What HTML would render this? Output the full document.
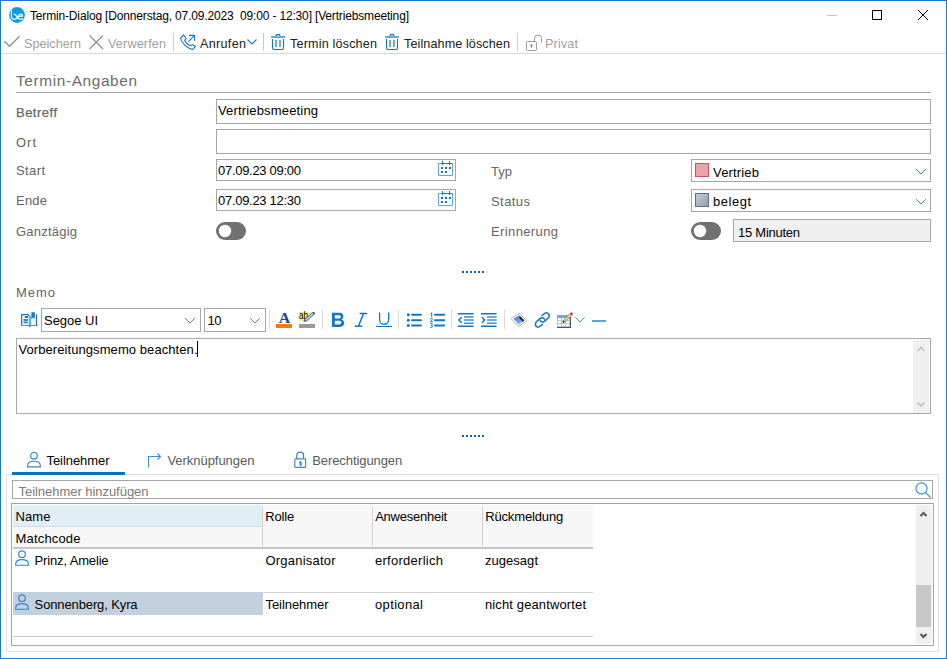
<!DOCTYPE html>
<html><head><meta charset="utf-8"><title>Termin-Dialog</title>
<style>html,body{margin:0;padding:0;background:#fff;overflow:hidden} svg{display:block} text{white-space:pre}</style>
</head><body><svg width="947" height="659" viewBox="0 0 947 659" font-family='"Liberation Sans", sans-serif'><rect x="0" y="0" width="947" height="659" fill="#ffffff"/>
<circle cx="17" cy="15" r="7.9" fill="#0d9ce6"/>
<path d="M11.4 10 V16 C11.4 18.4 12.8 19.3 14.6 19.3 C16.4 19.3 17.3 18 17.9 16.8 C18.7 15.2 19.5 14.1 20.9 14.1 C22 14.1 22.5 15 22.5 15.9 L18.8 16.6" fill="none" stroke="#fff" stroke-width="1.25"/>
<path d="M13.8 14.1 C15.5 14.1 16.4 15.5 17.1 16.9 C17.9 18.5 18.9 19.3 20.5 19.3 C21.5 19.3 22.3 18.9 22.8 18.3" fill="none" stroke="#fff" stroke-width="1.25"/>
<text x="30" y="20.3" font-size="12" fill="#000" font-weight="normal" text-anchor="start" textLength="379" lengthAdjust="spacing" >Termin-Dialog [Donnerstag, 07.09.2023&#160; 09:00 - 12:30] [Vertriebsmeeting]</text>
<rect x="827" y="15" width="10" height="1" fill="#c4c4c4"/>
<rect x="872.5" y="10.5" width="9" height="9" fill="none" stroke="#000" stroke-width="1" rx="0" />
<path d="M918 10 L928 20 M928 10 L918 20" stroke="#000" stroke-width="1" fill="none"/>
<path d="M4.3 41.3 L9.5 46.3 L19.6 36.3" stroke="#8f8f8f" stroke-width="1.3" fill="none"/>
<text x="24" y="47.5" font-size="12.6" fill="#a0a0a0" font-weight="normal" text-anchor="start" textLength="57" lengthAdjust="spacing" >Speichern</text>
<path d="M89.5 35.5 L103 49 M103 35.5 L89.5 49" stroke="#8a8a8a" stroke-width="1.1" fill="none"/>
<text x="108" y="47.5" font-size="12.6" fill="#a0a0a0" font-weight="normal" text-anchor="start" textLength="58" lengthAdjust="spacing" >Verwerfen</text>
<rect x="173" y="33" width="1" height="18" fill="#cccccc"/>
<path d="M183.6 35 L180.6 38.2 C181 42 186 47.5 192.2 49.6 L195.6 46.4 L192.2 44.6 L190.2 45.8 C188 44.8 185.6 42.4 184.6 40.4 L186.2 38.6 Z" stroke="#1276c6" stroke-width="1.1" fill="none" stroke-linejoin="round"/>
<path d="M188.4 41.6 L194.6 35.4 M189 35.4 H194.6 V40.8" stroke="#1276c6" stroke-width="1.1" fill="none"/>
<text x="200" y="47.5" font-size="12.6" fill="#202020" font-weight="normal" text-anchor="start" textLength="46" lengthAdjust="spacing" >Anrufen</text>
<path d="M247.5 39.5 L252 44 L256.5 39.5" stroke="#1276c6" stroke-width="1.1" fill="none"/>
<rect x="263" y="33" width="1" height="18" fill="#cccccc"/>
<path d="M275.5 37 L276.5 34.6 H279.5 L280.5 37" stroke="#1276c6" stroke-width="1.1" fill="none"/>
<rect x="271" y="36" width="14" height="2" fill="#62a9de"/>
<path d="M272.5 39 V48 Q272.5 49.5 274 49.5 H282 Q283.5 49.5 283.5 48 V39" stroke="#1276c6" stroke-width="1.15" fill="none"/>
<rect x="275" y="40" width="2" height="7" fill="#6aaee0"/>
<rect x="279" y="40" width="2" height="7" fill="#6aaee0"/>
<text x="290" y="47.5" font-size="12.6" fill="#202020" font-weight="normal" text-anchor="start" textLength="87" lengthAdjust="spacing" >Termin löschen</text>
<path d="M389.5 37 L390.5 34.6 H393.5 L394.5 37" stroke="#1276c6" stroke-width="1.1" fill="none"/>
<rect x="385" y="36" width="14" height="2" fill="#62a9de"/>
<path d="M386.5 39 V48 Q386.5 49.5 388 49.5 H396 Q397.5 49.5 397.5 48 V39" stroke="#1276c6" stroke-width="1.15" fill="none"/>
<rect x="389" y="40" width="2" height="7" fill="#6aaee0"/>
<rect x="393" y="40" width="2" height="7" fill="#6aaee0"/>
<text x="404" y="47.5" font-size="12.6" fill="#202020" font-weight="normal" text-anchor="start" textLength="106" lengthAdjust="spacing" >Teilnahme löschen</text>
<rect x="517" y="33" width="1" height="18" fill="#cccccc"/>
<rect x="526.5" y="41.5" width="10" height="9" rx="1" stroke="#9a9a9a" stroke-width="1" fill="none"/>
<path d="M534.5 41.5 V38.5 A3.5 3.5 0 0 1 541.5 38.5 V42.5" stroke="#9a9a9a" stroke-width="1" fill="none"/>
<path d="M531.5 48 V44.5 M530 46 L531.5 44.3 L533 46" stroke="#9a9a9a" stroke-width="1" fill="none"/>
<text x="545" y="47.5" font-size="12.6" fill="#a0a0a0" font-weight="normal" text-anchor="start" textLength="33" lengthAdjust="spacing" >Privat</text>
<rect x="1" y="53" width="945" height="1" fill="#d9d9d9"/>
<text x="16" y="86" font-size="15.4" fill="#6d6d6d" font-weight="normal" text-anchor="start" textLength="121" lengthAdjust="spacing" >Termin-Angaben</text>
<rect x="16" y="92" width="915" height="1" fill="#a0a0a0"/>
<text x="16" y="117" font-size="13" fill="#656565" font-weight="normal" text-anchor="start" textLength="41" lengthAdjust="spacing" stroke="#6d6d6d" stroke-width="0.25">Betreff</text>
<text x="16" y="147.2" font-size="13" fill="#656565" font-weight="normal" text-anchor="start" textLength="20" lengthAdjust="spacing" >Ort</text>
<text x="16" y="174.7" font-size="13" fill="#656565" font-weight="normal" text-anchor="start" textLength="29" lengthAdjust="spacing" >Start</text>
<text x="16" y="204.6" font-size="13" fill="#656565" font-weight="normal" text-anchor="start" textLength="31" lengthAdjust="spacing" >Ende</text>
<text x="16" y="236" font-size="13" fill="#656565" font-weight="normal" text-anchor="start" textLength="61" lengthAdjust="spacing" >Ganztägig</text>
<rect x="216.5" y="99.5" width="714" height="24" fill="#fff" stroke="#a6a6a6" stroke-width="1" rx="0" />
<text x="218" y="115.2" font-size="13" fill="#000" font-weight="normal" text-anchor="start" textLength="100" lengthAdjust="spacing" >Vertriebsmeeting</text>
<rect x="216.5" y="129.5" width="714" height="24" fill="#fff" stroke="#a6a6a6" stroke-width="1" rx="0" />
<rect x="216.5" y="159.5" width="239" height="21" fill="#fff" stroke="#a6a6a6" stroke-width="1" rx="0" />
<text x="218" y="174.6" font-size="13" fill="#000" font-weight="normal" text-anchor="start" textLength="83" lengthAdjust="spacing" >07.09.23 09:00</text>
<rect x="216.5" y="189.5" width="239" height="21" fill="#fff" stroke="#a6a6a6" stroke-width="1" rx="0" />
<text x="218" y="204.6" font-size="13" fill="#000" font-weight="normal" text-anchor="start" textLength="83" lengthAdjust="spacing" >07.09.23 12:30</text>
<path d="M439.8 163.5 H438.5 V174.4 Q438.5 175.5 439.6 175.5 H451.4 Q452.5 175.5 452.5 174.4 V163.5 H451.5" stroke="#5aa8de" stroke-width="1.1" fill="none"/>
<path d="M442.5 161 V165 M449.5 161 V165 M440.4 163.5 H452" stroke="#1a78c4" stroke-width="1.1" fill="none"/>
<rect x="441" y="167" width="2" height="2" fill="#1e6fb8"/>
<rect x="445" y="167" width="2" height="2" fill="#1e6fb8"/>
<rect x="449" y="167" width="2" height="2" fill="#1e6fb8"/>
<rect x="441" y="171" width="2" height="2" fill="#1e6fb8"/>
<rect x="445" y="171" width="2" height="2" fill="#1e6fb8"/>
<path d="M439.8 193.5 H438.5 V204.4 Q438.5 205.5 439.6 205.5 H451.4 Q452.5 205.5 452.5 204.4 V193.5 H451.5" stroke="#5aa8de" stroke-width="1.1" fill="none"/>
<path d="M442.5 191 V195 M449.5 191 V195 M440.4 193.5 H452" stroke="#1a78c4" stroke-width="1.1" fill="none"/>
<rect x="441" y="197" width="2" height="2" fill="#1e6fb8"/>
<rect x="445" y="197" width="2" height="2" fill="#1e6fb8"/>
<rect x="449" y="197" width="2" height="2" fill="#1e6fb8"/>
<rect x="441" y="201" width="2" height="2" fill="#1e6fb8"/>
<rect x="445" y="201" width="2" height="2" fill="#1e6fb8"/>
<rect x="216" y="222" width="30" height="18" rx="9" fill="#717171"/>
<circle cx="225" cy="231" r="6.2" fill="#fff"/>
<text x="491" y="175.8" font-size="13" fill="#656565" font-weight="normal" text-anchor="start" textLength="21" lengthAdjust="spacing" >Typ</text>
<text x="491" y="206.2" font-size="13" fill="#656565" font-weight="normal" text-anchor="start" textLength="39" lengthAdjust="spacing" >Status</text>
<text x="491" y="235.8" font-size="13" fill="#656565" font-weight="normal" text-anchor="start" textLength="67" lengthAdjust="spacing" >Erinnerung</text>
<rect x="691.5" y="159.5" width="239" height="22" fill="#fff" stroke="#a6a6a6" stroke-width="1" rx="0" />
<rect x="691.5" y="189.5" width="239" height="22" fill="#fff" stroke="#a6a6a6" stroke-width="1" rx="0" />
<rect x="695.5" y="163.5" width="13" height="13" fill="#eaa3aa" stroke="#d2505c" stroke-width="1"/>
<defs><linearGradient id="gs" x1="0" y1="0" x2="1" y2="1"><stop offset="0" stop-color="#c4cedb"/><stop offset="1" stop-color="#8e9db4"/></linearGradient></defs>
<rect x="695.5" y="193.5" width="13" height="13" fill="url(#gs)" stroke="#5d6f8c" stroke-width="1"/>
<text x="713" y="176.9" font-size="13" fill="#000" font-weight="normal" text-anchor="start" textLength="46" lengthAdjust="spacing" >Vertrieb</text>
<text x="713" y="206" font-size="13" fill="#000" font-weight="normal" text-anchor="start" textLength="38" lengthAdjust="spacing" >belegt</text>
<path d="M916.2 169.2 L921 174 L925.8 169.2" stroke="#2a8ad0" stroke-width="1.0" fill="none"/>
<path d="M916.2 199.2 L921 204 L925.8 199.2" stroke="#2a8ad0" stroke-width="1.0" fill="none"/>
<rect x="691" y="222" width="30" height="18" rx="9" fill="#717171"/>
<circle cx="700" cy="231" r="6.2" fill="#fff"/>
<rect x="733.5" y="219.5" width="197" height="22" fill="#f0f0f0" stroke="#a6a6a6" stroke-width="1" rx="0" />
<text x="738" y="237.2" font-size="13" fill="#000" font-weight="normal" text-anchor="start" textLength="62" lengthAdjust="spacing" >15 Minuten</text>
<rect x="462" y="271" width="2" height="2" fill="#0563b0"/>
<rect x="466" y="271" width="2" height="2" fill="#0563b0"/>
<rect x="470" y="271" width="2" height="2" fill="#0563b0"/>
<rect x="474" y="271" width="2" height="2" fill="#0563b0"/>
<rect x="478" y="271" width="2" height="2" fill="#0563b0"/>
<rect x="482" y="271" width="2" height="2" fill="#0563b0"/>
<text x="16" y="297" font-size="13" fill="#656565" font-weight="normal" text-anchor="start" textLength="39" lengthAdjust="spacing" >Memo</text>
<path d="M21.6 325.2 V314.6 H27.6 L29.2 315.8" stroke="#1a78c4" stroke-width="1.25" fill="none"/>
<path d="M36.5 314.3 V325.2" stroke="#1a78c4" stroke-width="1.25" fill="none"/>
<rect x="21" y="325" width="17" height="1" fill="#4a9ad6"/>
<rect x="28.8" y="315.8" width="2.3999999999999986" height="10.199999999999989" fill="#6aaee0"/>
<path d="M28 325.6 H31.2 L29.6 327.2 Z" fill="#1a78c4"/>
<path d="M31.4 312.2 H34.8 V318.9 L33.1 317.6 L31.4 318.9 Z" fill="#1a78c4"/>
<rect x="24.8" y="316" width="3.1999999999999993" height="2" fill="#1a78c4"/>
<rect x="23.4" y="319" width="4.600000000000001" height="2" fill="#3a8ed0"/>
<rect x="23.4" y="321.4" width="4.600000000000001" height="2.0" fill="#3a8ed0"/>
<rect x="41.5" y="308.5" width="159" height="23" fill="#fff" stroke="#a4a6aa" stroke-width="1" rx="0" />
<text x="44" y="325.2" font-size="13" fill="#000" font-weight="normal" text-anchor="start" textLength="54" lengthAdjust="spacing" >Segoe UI</text>
<path d="M185.2 318.2 L190 323 L194.8 318.2" stroke="#2f8ed2" stroke-width="1.0" fill="none"/>
<rect x="204.5" y="308.5" width="61" height="23" fill="#fff" stroke="#a4a6aa" stroke-width="1" rx="0" />
<text x="207.5" y="324.5" font-size="13" fill="#000" font-weight="normal" text-anchor="start" textLength="14" lengthAdjust="spacing" >10</text>
<path d="M250.2 318.2 L255 323 L259.8 318.2" stroke="#2f8ed2" stroke-width="1.0" fill="none"/>
<rect x="269" y="310" width="1" height="19" fill="#d8d8d8"/>
<rect x="322" y="310" width="1" height="19" fill="#d8d8d8"/>
<rect x="398" y="310" width="1" height="19" fill="#d8d8d8"/>
<rect x="451" y="310" width="1" height="19" fill="#d8d8d8"/>
<rect x="504" y="310" width="1" height="19" fill="#d8d8d8"/>
<text x="284.6" y="322.9" font-family="Liberation Serif" font-weight="bold" font-size="15" fill="#24428e" text-anchor="middle" textLength="11.5" lengthAdjust="spacingAndGlyphs">A</text>
<rect x="276" y="324" width="16" height="4" fill="#ff7a00"/>
<rect x="299" y="312" width="10" height="9" fill="#f4f07c"/>
<text x="299" y="318.7" font-size="10" fill="#000" textLength="9" lengthAdjust="spacingAndGlyphs">ab</text>
<path d="M305.4 320.4 L313.4 313.4" stroke="#4a6494" stroke-width="3.2" fill="none" stroke-linecap="round"/>
<path d="M305.6 320.2 L313.0 313.8" stroke="#cfe0f6" stroke-width="1.3" fill="none"/>
<path d="M302.6 322.6 L304.6 320.4 L305.8 321.6 Z" fill="#b07040"/>
<rect x="299" y="324" width="16" height="4" fill="#9a9a9a"/>
<path fill-rule="evenodd" fill="#1276c6" d="M332 312.7 H339.3 C342.3 312.7 343.4 314.6 343.4 316.2 C343.4 317.7 342.7 318.8 341.4 319.4 C343.3 320 344.2 321.5 344.2 323 C344.2 325.2 342.6 326.9 339.5 326.9 H332 Z M334.8 315.2 V318.4 H338.8 C340.2 318.4 340.8 317.7 340.8 316.8 C340.8 315.8 340.2 315.2 338.8 315.2 Z M334.8 320.8 V324.4 H339.3 C340.6 324.4 341.4 323.6 341.4 322.6 C341.4 321.5 340.6 320.8 339.3 320.8 Z"/>
<path d="M363.6 313.5 L358.4 326.2 M360.2 313.5 H366.6 M355.2 326.3 H361.8" stroke="#1276c6" stroke-width="1.5" fill="none" stroke-linecap="round"/>
<path d="M379.6 312.5 V319.8 A4.55 4.55 0 0 0 388.7 319.8 V312.5" stroke="#1276c6" stroke-width="1.3" fill="none"/>
<rect x="376" y="326" width="16" height="1" fill="#1276c6"/>
<circle cx="408.3" cy="314.8" r="1.5" fill="#1276c6"/>
<path d="M412 314.8 H421 M435 314.8 H444.2" stroke="#1276c6" stroke-width="2" stroke-linecap="round"/>
<circle cx="408.3" cy="320.2" r="1.5" fill="#1276c6"/>
<path d="M412 320.2 H421 M435 320.2 H444.2" stroke="#1276c6" stroke-width="2" stroke-linecap="round"/>
<circle cx="408.3" cy="325.5" r="1.5" fill="#1276c6"/>
<path d="M412 325.5 H421 M435 325.5 H444.2" stroke="#1276c6" stroke-width="2" stroke-linecap="round"/>
<path d="M430.4 313.9 L431.7 312.8 V317.1 M430.2 318.9 Q431.2 317.9 432.2 318.5 Q432.7 319.2 431.9 320.1 L430.3 321.8 H432.8 M430.3 323.5 Q432.6 323.1 432.4 324.5 Q432.2 325.2 431.2 325.3 Q432.8 325.5 432.6 326.6 Q432.2 327.7 430.2 327.4" stroke="#1276c6" stroke-width="0.95" fill="none"/>
<path d="M458 313.7 H473.6 M458 326.2 H473.6" stroke="#1276c6" stroke-width="1.5"/>
<path d="M464 316.9 H473.6 M464 320.0 H473.6 M464 323.2 H473.6" stroke="#3d8fcf" stroke-width="1.5"/>
<path d="M461.6 317.2 L458.9 320 L461.6 322.8" stroke="#1276c6" stroke-width="1.5" fill="none"/>
<path d="M481 313.7 H496.6 M481 326.2 H496.6" stroke="#1276c6" stroke-width="1.5"/>
<path d="M487 316.9 H496.6 M487 320.0 H496.6 M487 323.2 H496.6" stroke="#3d8fcf" stroke-width="1.5"/>
<path d="M481.9 317.2 L484.6 320 L481.9 322.8" stroke="#1276c6" stroke-width="1.5" fill="none"/>
<defs><linearGradient id="gi" x1="0" y1="0" x2="1" y2="1"><stop offset="0" stop-color="#3f6fe0"/><stop offset="1" stop-color="#9cc8f0"/></linearGradient></defs>
<path d="M511.2 318.6 L519.2 313.1 L526.8 320.9 L518.7 326.5 Z" fill="#fff" stroke="#a8a8a8" stroke-width="0.9"/>
<path d="M513.6 318.8 L519.2 315 L524.4 320.6 L518.8 324.4 Z" fill="url(#gi)"/>
<path d="M520.4 316.4 L524.4 320.6 L522.6 321.8 L518.8 317.6 Z" fill="#1a2a20"/>
<path d="M542.0 315.4 L545.2 313.2 C547.2 312 549.6 313.6 549.2 316.2 C549 317 548.6 317.6 548 318.2 L544.4 321.4 C542.9 322.6 540.6 322.2 540.3 320.4" stroke="#1276c6" stroke-width="1.5" fill="none" stroke-linecap="round" stroke-linejoin="round"/>
<path d="M542.6 324.4 L539.4 326.6 C537.4 327.8 535 326.2 535.4 323.6 C535.6 322.8 536 322.2 536.6 321.6 L540.2 318.4 C541.7 317.2 544 317.6 544.3 319.4" stroke="#1276c6" stroke-width="1.5" fill="none" stroke-linecap="round" stroke-linejoin="round"/>
<rect x="557" y="315" width="14" height="13" fill="#b4c4e0"/>
<rect x="557" y="315" width="14" height="3" fill="#7ca2e6"/>
<rect x="558" y="318" width="3" height="2" fill="#fafcff"/>
<rect x="558" y="321" width="3" height="2" fill="#fafcff"/>
<rect x="558" y="324" width="3" height="2" fill="#fafcff"/>
<rect x="562" y="318" width="3" height="2" fill="#fafcff"/>
<rect x="562" y="321" width="3" height="2" fill="#fafcff"/>
<rect x="562" y="324" width="3" height="2" fill="#fafcff"/>
<rect x="566" y="318" width="3" height="2" fill="#fafcff"/>
<rect x="566" y="321" width="3" height="2" fill="#fafcff"/>
<rect x="566" y="324" width="3" height="2" fill="#fafcff"/>
<rect x="570" y="317" width="1" height="11" fill="#44567e"/>
<rect x="557" y="327" width="14" height="1" fill="#44567e"/>
<path d="M564.2 321.2 L571.2 314.2" stroke="#8a7a40" stroke-width="3" fill="none"/>
<path d="M564.4 321.0 L571.0 314.4" stroke="#ecd874" stroke-width="1.8" fill="none"/>
<path d="M562.8 322.6 L564.4 321.0" stroke="#303030" stroke-width="1.6" fill="none"/>
<path d="M570.6 314.6 L572.4 312.8" stroke="#d03030" stroke-width="2.4" fill="none"/>
<path d="M575.3 317.2 L580 321.8 L584.7 317.2" stroke="#2f8ed2" stroke-width="1.0" fill="none"/>
<rect x="592" y="320" width="14" height="2" fill="#5aa5dc"/>
<rect x="16.5" y="338.5" width="914" height="75" fill="#fff" stroke="#a8a9ad" stroke-width="1" rx="0" />
<text x="18.5" y="353.9" font-size="13" fill="#000" font-weight="normal" text-anchor="start" textLength="179" lengthAdjust="spacing" >Vorbereitungsmemo beachten.</text>
<rect x="197" y="341" width="1" height="16" fill="#000"/>
<rect x="913" y="340" width="16" height="73" fill="#f0f0f0"/>
<path d="M917.5 351 L921 347.5 L924.5 351" stroke="#c0c0c0" stroke-width="1.6" fill="none"/>
<path d="M917.5 402.5 L921 406 L924.5 402.5" stroke="#c0c0c0" stroke-width="1.6" fill="none"/>
<rect x="462" y="435" width="2" height="2" fill="#0563b0"/>
<rect x="466" y="435" width="2" height="2" fill="#0563b0"/>
<rect x="470" y="435" width="2" height="2" fill="#0563b0"/>
<rect x="474" y="435" width="2" height="2" fill="#0563b0"/>
<rect x="478" y="435" width="2" height="2" fill="#0563b0"/>
<rect x="482" y="435" width="2" height="2" fill="#0563b0"/>
<circle cx="34" cy="455.8" r="3.3" stroke="#2f88c8" stroke-width="1.15" fill="none"/>
<path d="M27.6 466.1 C27.6 462.1 30 461.20000000000005 34 461.20000000000005 C38 461.20000000000005 40.4 462.1 40.4 466.1 V466.90000000000003 H27.6 Z" stroke="#2f88c8" stroke-width="1.1" fill="none" stroke-linejoin="round"/>
<text x="46.5" y="465.2" font-size="13" fill="#000" font-weight="normal" text-anchor="start" textLength="63" lengthAdjust="spacing" >Teilnehmer</text>
<path d="M148.5 467.5 V456.5 H160.5 M157.5 453.5 L160.5 456.5 L157.5 459.5" stroke="#3a8fcc" stroke-width="1.1" fill="none"/>
<text x="167.4" y="465" font-size="13" fill="#5a5a5a" font-weight="normal" text-anchor="start" textLength="87" lengthAdjust="spacing" >Verknüpfungen</text>
<rect x="294.8" y="458.8" width="10.8" height="8.6" rx="1" stroke="#3a8fcc" stroke-width="1.2" fill="none"/>
<path d="M296.8 458.8 V455.6 A3.4 3.4 0 0 1 303.6 455.6 V458.8" stroke="#2f86c6" stroke-width="1.2" fill="none"/>
<circle cx="300.2" cy="462.3" r="1.1" fill="#1a78c0"/>
<rect x="299.5" y="462" width="2.3000000000000114" height="3.8000000000000114" fill="#4a9ad6"/>
<text x="312.2" y="465" font-size="13" fill="#5a5a5a" font-weight="normal" text-anchor="start" textLength="90" lengthAdjust="spacing" >Berechtigungen</text>
<rect x="6.5" y="474.5" width="932" height="177" fill="none" stroke="#e2e2e2" stroke-width="1" rx="0" />
<rect x="12" y="472" width="113" height="3" fill="#0c6fc0"/>
<rect x="12.5" y="480.5" width="920" height="18" fill="#fff" stroke="#a6a6a6" stroke-width="1" rx="0" />
<text x="18.5" y="495.9" font-size="13" fill="#7a7a7a" font-weight="normal" text-anchor="start" textLength="130" lengthAdjust="spacing" >Teilnehmer hinzufügen</text>
<circle cx="921.5" cy="488.5" r="5.6" stroke="#2a8fd0" stroke-width="1.1" fill="none"/>
<path d="M925.6 492.6 L930.5 497.5" stroke="#2a8fd0" stroke-width="1.1"/>
<rect x="11.5" y="503.5" width="922" height="142" fill="#fff" stroke="#a4a4a8" stroke-width="1" rx="0" />
<rect x="13" y="505" width="580" height="42" fill="#f7f7f7"/>
<rect x="13" y="505" width="249" height="21" fill="#e0eef6"/>
<rect x="13" y="526" width="249" height="1" fill="#dcdcdc"/>
<rect x="262" y="507" width="1" height="39" fill="#d2d2d2"/>
<rect x="372" y="507" width="1" height="39" fill="#d2d2d2"/>
<rect x="482" y="507" width="1" height="39" fill="#d2d2d2"/>
<rect x="13" y="547" width="580" height="2" fill="#c6c6c6"/>
<text x="15.5" y="520.6" font-size="13" fill="#000" font-weight="normal" text-anchor="start" textLength="35" lengthAdjust="spacing" >Name</text>
<text x="15.5" y="542.8" font-size="13" fill="#000" font-weight="normal" text-anchor="start" textLength="65" lengthAdjust="spacing" >Matchcode</text>
<text x="265.3" y="520.6" font-size="13" fill="#000" font-weight="normal" text-anchor="start" textLength="29" lengthAdjust="spacing" >Rolle</text>
<text x="375.2" y="520.6" font-size="13" fill="#000" font-weight="normal" text-anchor="start" textLength="72" lengthAdjust="spacing" >Anwesenheit</text>
<text x="485.2" y="520.6" font-size="13" fill="#000" font-weight="normal" text-anchor="start" textLength="78" lengthAdjust="spacing" >Rückmeldung</text>
<circle cx="22" cy="554.2" r="3.3" stroke="#2f88c8" stroke-width="1.15" fill="none"/>
<path d="M15.6 564.5 C15.6 560.5 18 559.6 22 559.6 C26 559.6 28.4 560.5 28.4 564.5 V565.3 H15.6 Z" stroke="#2f88c8" stroke-width="1.1" fill="none" stroke-linejoin="round"/>
<text x="34.6" y="565.3" font-size="13" fill="#000" font-weight="normal" text-anchor="start" textLength="74" lengthAdjust="spacing" >Prinz, Amelie</text>
<text x="265.5" y="565" font-size="13" fill="#000" font-weight="normal" text-anchor="start" textLength="70" lengthAdjust="spacing" >Organisator</text>
<text x="375" y="565" font-size="13" fill="#000" font-weight="normal" text-anchor="start" textLength="68" lengthAdjust="spacing" >erforderlich</text>
<text x="485" y="565" font-size="13" fill="#000" font-weight="normal" text-anchor="start" textLength="53" lengthAdjust="spacing" >zugesagt</text>
<rect x="262" y="592" width="331" height="1" fill="#d2d2d2"/>
<rect x="13" y="592" width="250" height="23" fill="#c3d0dd"/>
<circle cx="22" cy="598.2" r="3.3" stroke="#2f88c8" stroke-width="1.15" fill="none"/>
<path d="M15.6 608.5 C15.6 604.5 18 603.6 22 603.6 C26 603.6 28.4 604.5 28.4 608.5 V609.3 H15.6 Z" stroke="#2f88c8" stroke-width="1.1" fill="none" stroke-linejoin="round"/>
<text x="34.6" y="608.9" font-size="13" fill="#000" font-weight="normal" text-anchor="start" textLength="103" lengthAdjust="spacing" >Sonnenberg, Kyra</text>
<text x="265.5" y="608.9" font-size="13" fill="#000" font-weight="normal" text-anchor="start" textLength="63" lengthAdjust="spacing" >Teilnehmer</text>
<text x="375" y="608.9" font-size="13" fill="#000" font-weight="normal" text-anchor="start" textLength="48" lengthAdjust="spacing" >optional</text>
<text x="485" y="608.9" font-size="13" fill="#000" font-weight="normal" text-anchor="start" textLength="101" lengthAdjust="spacing" >nicht geantwortet</text>
<rect x="13" y="636" width="580" height="1" fill="#c8c8c8"/>
<rect x="916" y="505" width="16" height="139" fill="#f0f0f0"/>
<rect x="916" y="585" width="15" height="42" fill="#c8c8c8"/>
<path d="M920.5 516 L923.5 513 L926.5 516" stroke="#555" stroke-width="2" fill="none"/>
<path d="M920.5 634 L923.5 637 L926.5 634" stroke="#555" stroke-width="2" fill="none"/>
<rect x="0.5" y="0.5" width="946" height="658" fill="none" stroke="#1979d3" stroke-width="1"/></svg></body></html>
